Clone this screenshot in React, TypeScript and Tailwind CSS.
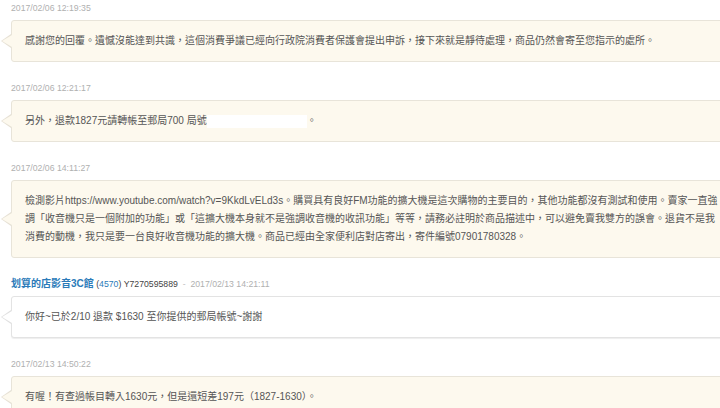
import React from 'react';

type Entry = {
  time: string;
  seller?: boolean;
  lines: React.ReactNode[];
};

const entries: Entry[] = [
  {
    time: '2017/02/06 12:19:35',
    lines: ['感謝您的回覆。遺憾沒能達到共識，這個消費爭議已經向行政院消費者保護會提出申訴，接下來就是靜待處理，商品仍然會寄至您指示的處所。'],
  },
  {
    time: '2017/02/06 12:21:17',
    lines: [
      <>
        另外，退款1827元請轉帳至郵局700 局號
        <span className="inline-block w-[100px] h-[13px] bg-white align-middle" />。
      </>,
    ],
  },
  {
    time: '2017/02/06 14:11:27',
    lines: [
      '檢測影片https://www.youtube.com/watch?v=9KkdLvELd3s。購買具有良好FM功能的擴大機是這次購物的主要目的，其他功能都沒有測試和使用。賣家一直強',
      '調「收音機只是一個附加的功能」或「這擴大機本身就不是強調收音機的收訊功能」等等，請務必註明於商品描述中，可以避免賣我雙方的誤會。退貨不是我',
      '消費的動機，我只是要一台良好收音機功能的擴大機。商品已經由全家便利店對店寄出，寄件編號07901780328。',
    ],
  },
  {
    time: '2017/02/13 14:21:11',
    seller: true,
    lines: ['你好~已於2/10 退款 $1630 至你提供的郵局帳號~謝謝'],
  },
  {
    time: '2017/02/13 14:50:22',
    lines: ['有喔！有查過帳目轉入1630元，但是還短差197元（1827-1630）。'],
  },
];

function Header({ entry }: { entry: Entry }) {
  if (!entry.seller) {
    return <div className="h-[14px] leading-[14px] text-[8.7px] text-[#b0b0b0] mb-[5px]">{entry.time}</div>;
  }
  return (
    <div className="h-[14px] leading-[14px] text-[8.7px] mb-[5px] whitespace-nowrap">
      <a className="text-[10px] font-bold text-[#2b7bb9]">划算的店影音3C館</a>
      <span className="text-[#444]"> (</span>
      <span className="text-[#2b7bb9]">4570</span>
      <span className="text-[#444]">) Y7270595889</span>
      <span className="text-[#c0c0c0]"> &nbsp;- &nbsp;</span>
      <span className="text-[#b0b0b0]">{entry.time}</span>
    </div>
  );
}

function Bubble({ entry }: { entry: Entry }) {
  const seller = entry.seller;
  return (
    <div
      className={
        seller
          ? 'relative rounded-[3px] border border-[#e3e3e3] bg-white px-[13px] py-[11px] shadow-[0_1px_1px_rgba(0,0,0,0.07)]'
          : 'relative rounded-[3px] border border-[#e8e4d9] bg-[#fdf9ee] px-[13px] py-[11px]'
      }
    >
      <span
        className={
          seller
            ? 'absolute left-[-11px] top-1/2 -translate-y-1/2 w-0 h-0 border-y-[7px] border-y-transparent border-r-[10px] border-r-[#e0e0e0]'
            : 'absolute left-[-11px] top-1/2 -translate-y-1/2 w-0 h-0 border-y-[7px] border-y-transparent border-r-[10px] border-r-[#e6e1d5]'
        }
      />
      <span
        className={
          seller
            ? 'absolute left-[-10px] top-1/2 -translate-y-1/2 w-0 h-0 border-y-[6px] border-y-transparent border-r-[10px] border-r-white'
            : 'absolute left-[-10px] top-1/2 -translate-y-1/2 w-0 h-0 border-y-[6px] border-y-transparent border-r-[10px] border-r-[#fdf9ee]'
        }
      />
      {entry.lines.map((line, i) => (
        <div key={i} className="text-[10px] leading-[18px] text-[#555] whitespace-nowrap">
          {line}
        </div>
      ))}
    </div>
  );
}

export default function App() {
  return (
    <div className="w-[720px] h-[408px] overflow-hidden bg-white font-['Liberation_Sans','Noto_Sans_CJK_TC',sans-serif]">
      <div className="w-[760px] pl-[11px] pt-[1px]">
        {entries.map((entry) => (
          <div key={entry.time} className="mb-[19px]">
            <Header entry={entry} />
            <Bubble entry={entry} />
          </div>
        ))}
      </div>
    </div>
  );
}
